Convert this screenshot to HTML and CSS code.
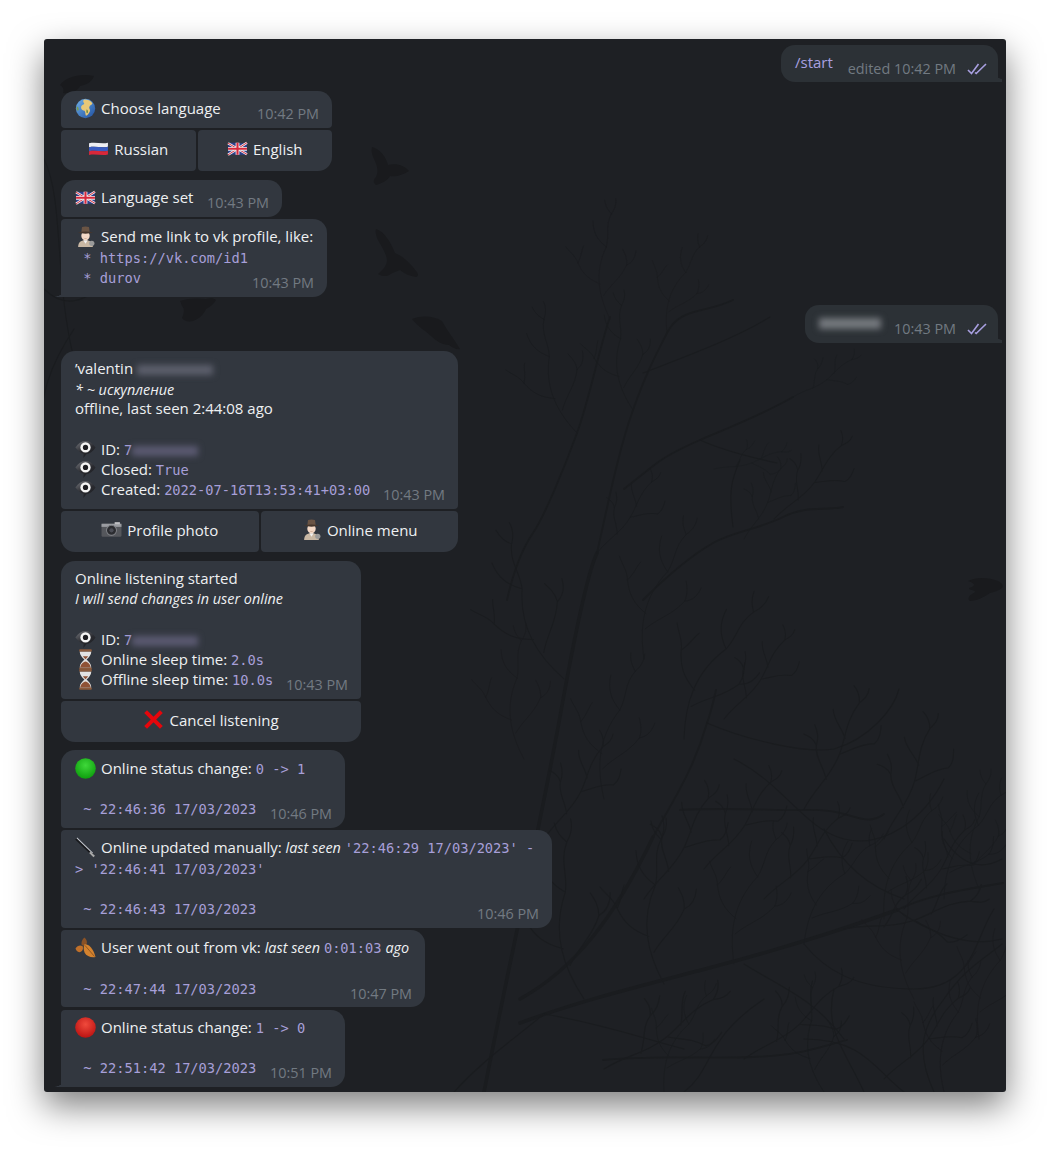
FILE: index.html
```html
<!DOCTYPE html>
<html lang="en">
<head>
<meta charset="utf-8">
<title>Chat</title>
<link rel="stylesheet" href="styles.css">
</head>
<body>
<svg width="0" height="0" class="defs" aria-hidden="true">
  <defs>
    <radialGradient id="g-green" cx=".5" cy=".35" r=".7"><stop offset="0" stop-color="#3fd83a"/><stop offset="1" stop-color="#0a9a0a"/></radialGradient>
    <radialGradient id="g-red" cx=".5" cy=".35" r=".7"><stop offset="0" stop-color="#f04a3c"/><stop offset="1" stop-color="#b80f0f"/></radialGradient>
    <linearGradient id="g-eye" x1="0" y1="0" x2=".6" y2="1"><stop offset="0" stop-color="#75777d"/><stop offset=".6" stop-color="#2a2b30"/><stop offset="1" stop-color="#1d1e22"/></linearGradient>
    <linearGradient id="g-sea" x1="0" y1="0" x2="1" y2="1"><stop offset="0" stop-color="#6fb0e8"/><stop offset="1" stop-color="#1f4fa0"/></linearGradient>
    <symbol id="e-globe" viewBox="0 0 20 20">
      <circle cx="10" cy="10" r="9.200" fill="url(#g-sea)"/>
      <path d="M9 1.500c3 0 6 1 7.600 3.500-.6 2-2.400 1.500-3 3.500-.4 1.800 1.400 2.400.4 4.500-.8 1.600-2 3.400-3.600 4-.8-1.500-.2-3.500-1.300-4.800-1.300-.5-3-.9-3.300-2.700-.3-2 1.200-3 2.700-3.500C9.400 5 7.900 4.200 7.800 3c0-.6.500-1.200 1.200-1.500z" fill="#e8c878"/>
      <path d="M2 8c1.300.5 1.800 2 1.400 3.500-.3 1-1 .8-1.600 0C1.300 10.500 1.400 9 2 8z" fill="#7a9a50"/>
      <path d="M11 11c1 .2 1.600 1.500 1.200 3-.6.800-1.200.4-1.400-.6z" fill="#6a8a40"/>
    </symbol>
    <symbol id="e-ru" viewBox="0 0 20 20">
      <path d="M1 5c6-1.500 12 1 18-.5v3.800c-6 1.500-12-1-18 .5z" fill="#eeeef2"/>
      <path d="M1 8.800c6-1.500 12 1 18-.5v3.800c-6 1.500-12-1-18 .5z" fill="#3a5cc0"/>
      <path d="M1 12.600c6-1.500 12 1 18-.5v3.500c-6 1.500-12-1-18 .5z" fill="#d8283a"/>
    </symbol>
    <symbol id="e-uk" viewBox="0 0 20 20">
      <path d="M1 5c6-1.200 12 .8 18-.4v11c-6 1.200-12-.8-18 .4z" fill="#2c3f8c"/>
      <path d="M1 5l18 10.500M19 4.500L1 16" stroke="#f0f0f0" stroke-width="2.400"/>
      <path d="M1 5l18 10.500M19 4.500L1 16" stroke="#d6283c" stroke-width=".9"/>
      <path d="M10 4.500v11.500M1 10.300h18" stroke="#f0f0f0" stroke-width="3.600"/>
      <path d="M10 4.500v11.500M1 10.300h18" stroke="#d6283c" stroke-width="2"/>
    </symbol>
    <symbol id="e-spy" viewBox="0 0 20 20">
      <path d="M3 20c0-4 2-6.500 7-6.500s7 2.500 7 6.500z" fill="#c9b8a4"/>
      <path d="M8 13.500h4l-2 3.500z" fill="#f2f2f2"/>
      <ellipse cx="10" cy="9.300" rx="4" ry="4.400" fill="#f4d9c6"/>
      <path d="M6.700 1c2.200-.8 4.400-.8 6.600 0l.7 5H6z" fill="#6a5444"/>
      <path d="M2.800 6.300c4.400-1.500 10-1.500 14.400 0-4.400 1.300-10 1.300-14.400 0z" fill="#45362c"/>
      <path d="M8 11.300c1.300.5 2.700.5 4 0-.6 1-3.400 1-4 0z" fill="#b08a70"/>
      <circle cx="16" cy="16.500" r="2.500" fill="#9a9a9a"/>
    </symbol>
    <symbol id="e-eye" viewBox="0 0 20 20">
      <path d="M.4 8C3.500 3.800 6.500 2 10 2s6.500 1.800 9.600 6c-2.700 4-5.600 6-8.600 6.300l-3 3.700.2-4C5.400 13.400 3 11.200.4 8z" fill="url(#g-eye)"/>
      <circle cx="10" cy="8" r="4.900" fill="#f4f4f4"/>
      <circle cx="10" cy="8" r="2.500" fill="#1c1c20"/>
    </symbol>
    <symbol id="e-camera" viewBox="0 0 20 20">
      <rect x=".5" y="4.500" width="19" height="12.500" rx="1.200" fill="#55575c"/>
      <rect x=".5" y="4.500" width="19" height="3" fill="#9a9ca1"/>
      <rect x="13" y="3" width="5" height="2" fill="#c0c0c4"/>
      <circle cx="10" cy="10.800" r="4.800" fill="#2b2c30" stroke="#7d7f84"/>
      <circle cx="10" cy="10.800" r="2" fill="#4b4d55"/>
    </symbol>
    <symbol id="e-glass" viewBox="0 0 20 20">
      <rect x="4" y=".3" width="12" height="2.200" rx=".8" fill="#8a5a3c"/>
      <rect x="4" y="17.500" width="12" height="2.200" rx=".8" fill="#8a5a3c"/>
      <path d="M4.500 2.500h11c0 3-2.300 5.500-4.500 7.500 2.200 2 4.500 4.500 4.500 7.500h-11c0-3 2.300-5.500 4.500-7.500-2.200-2-4.500-4.500-4.500-7.500z" fill="#e2e2e2"/>
      <path d="M7.500 6.800h5c-.6 1-1.500 1.900-2.500 3-1-1.100-1.900-2-2.500-3zM5 17.500c.3-2.800 2.800-5 5-5.500 2.200.5 4.700 2.700 5 5.500z" fill="#8f5236"/>
    </symbol>
    <symbol id="e-x" viewBox="0 0 20 20">
      <path d="M2.500 2.500l15 15M17.500 2.500l-15 15" stroke="#e6060c" stroke-width="3.800" fill="none"/>
    </symbol>
    <symbol id="e-green" viewBox="0 0 20 20"><circle cx="10" cy="10" r="9.800" fill="url(#g-green)"/></symbol>
    <symbol id="e-red" viewBox="0 0 20 20"><circle cx="10" cy="10" r="9.800" fill="url(#g-red)"/></symbol>
    <symbol id="e-knife" viewBox="0 0 20 20">
      <path d="M1 1.500l15.500 14.800" stroke="#17181b" stroke-width="2.400" fill="none"/>
      <path d="M1.800 .8l15 14.500" stroke="#c4c8d0" stroke-width="1" fill="none"/>
      <path d="M14.800 14l4.200 3.800-1.400 1.500-4.200-4z" fill="#a8a8a8"/>
    </symbol>
    <symbol id="e-leaves" viewBox="0 0 20 20">
      <path d="M9 .5c2 1.800 3 4.200 2 6.500-1 1.500-3.300 1.700-4.600.7-.9-2.700.5-5.500 2.600-7.200z" fill="#8a5226"/>
      <path d="M.5 11C2 8.300 5 7.500 7.300 8.800c1 2.500-.5 5.500-3.200 5.700C2.300 14.200 1 12.700.5 11z" fill="#c0702a"/>
      <path d="M9 7c3.500-.5 8 2.800 10.500 12-4 .8-8.500-.5-10.300-4-1.200-2.500-1.200-5.500-.2-8z" fill="#d4822e"/>
      <path d="M9.500 8l9 10.500" stroke="#7a4a1c" stroke-width=".7"/>
    </symbol>
    <symbol id="e-ticks" viewBox="0 0 20 12">
      <path d="M1 7l3.500 3.500L11.500 1M8 9.500l1.200 1L19 1" stroke="#a89fe0" stroke-width="1.600" fill="none"/>
    </symbol>
  </defs>
</svg>

<main class="window">
  <svg class="wall" viewBox="0 0 962 1053" aria-hidden="true">
    <defs>
      <path id="twig" d="M0 0C-10-30-12-60 8-90M8-90c6-14 2-26 12-40M8-90c-10-10-14-20-12-34M-6-45c-14-8-20-16-24-30M-30-75c-2-10-8-14-12-22M-30-75c6-8 6-14 10-20M-4-30c12-14 24-18 34-34M30-64c8-2 12-8 14-16M30-64c2-8 0-14-2-20M20-130c6-6 8-12 8-18M20-130c-4-6-6-10-6-18"/>
      <path id="sprig" d="M0 0C20-8 34-6 52-16 66-24 74-34 92-38M30-7C36-18 34-26 42-34M42-34c2-6 0-10-2-14M42-34c6-4 8-8 10-14M52-16c10 4 18 4 28 12M64-23C68-32 66-40 72-48M80-4c6 0 10-4 14-8M92-38c4-4 6-8 6-14M92-38c6 0 10 0 14-4"/>
    </defs>
    <g class="birds">
      <path d="M16 46c6-8 20-12 34-9-2 6-8 9-14 10-2 5-10 8-17 7 1-3 1-5-3-8z"/>
      <path d="M328 108c8 2 14 10 16 18 8-2 16 0 21 6-6 4-13 6-19 5-2 4-7 7-14 9-3-2-3-5 0-8 3-6 1-12-2-18-2-4-3-8-2-12z"/>
      <path d="M332 190c9 3 15 14 19 24 9 4 15 10 21 18 2 2 3 5 0 6-6-1-11-3-16-7-2 1-6 2-11 5-3 2-8 1-11-1 5-4 9-9 9-14-1-8-6-14-9-20-2-4-3-8-2-11z"/>
      <path d="M136 262c8-3 18-3 26-2 4-1 8-1 10 1-2 4-6 7-10 9-2 5-7 10-13 12-5 1-9 0-11-3 2-4 3-9 0-12-1-2-1-4-2-5z"/>
      <path d="M368 280c10-4 22-3 30 2 4 8 12 18 18 28-3 1-7-1-11-4-6 0-13-4-18-9-5-5-13-9-19-17z"/>
      <path d="M924 542c8-4 20-4 30 0 4 2 6 5 4 7-4 3-8 4-12 5-6 4-13 8-20 8-3-2-1-5 2-7 4-2 4-3 0-4-4-1-4-2 0-3 4-2 2-4-4-6z"/>
    </g>
    <g class="trunks">
      <path class="t1" d="M440 1053C470 900 500 770 519 661 532 590 545 530 553 514"/>
      <path class="t1" d="M476 984C540 960 609 944 680 925S800 890 853 871"/>
      <path class="t1" d="M476 960C530 930 570 880 609 798"/>
      <path class="t2" d="M553 514C565 460 575 410 589 371S610 320 623 294 660 275 689 261"/>
      <path class="t2" d="M463 561C470 530 478 510 489 494S520 430 533 394 555 310 566 278"/>
      <path class="t2" d="M599 561C630 530 650 515 669 504S715 490 739 478 780 472 799 468"/>
      <path class="t2" d="M580 450C595 438 605 430 613 424S640 408 656 401 720 375 749 358"/>
      <path class="t2" d="M853 871C885 855 925 850 959 844"/>
      <path class="t2" d="M559 1021C610 1016 660 1020 709 1018S775 1008 803 1001"/>
      <path class="t2" d="M636 771C690 768 730 772 769 771S820 790 840 775"/>
      <path class="t2" d="M609 798C630 760 650 730 663 684 668 670 670 660 672 651"/>
      <path class="t3" d="M656 401C680 412 705 418 733 424M696 421C688 440 684 450 689 488M599 334C640 318 690 300 726 278"/>
      <path class="t3" d="M663 684C700 700 760 715 790 710 825 700 850 670 855 650M690 720C740 745 760 790 800 800 840 810 880 780 900 740"/>
      <path class="t3" d="M760 905C780 930 810 950 870 950S930 900 950 870M820 1053C800 1010 780 990 790 950M890 1053C870 1010 880 985 900 960 920 930 940 920 958 905"/>
      <path class="t3" d="M500 975C560 985 600 1000 640 1010M640 1053C670 1030 660 1000 720 960M860 1053C830 1030 820 1000 760 1000M0 250C30 280 60 250 90 210"/>
      <path class="t3" d="M0 120C20 160 10 240 30 320M0 410C-10 360 10 320 30 290M410 1053C440 1020 470 1000 500 975"/>
      <path class="t3" d="M853 871C880 890 920 910 958 900M700 925C740 950 770 960 800 1000M900 800C920 830 940 830 958 820M780 790C800 830 830 850 860 860"/>
    </g>
    <g class="twigs">
      <use href="#twig" transform="translate(566 280) rotate(-8) scale(.8)"/>
      <use href="#twig" transform="translate(623 294) rotate(12) scale(.7)"/>
      <use href="#twig" transform="translate(533 394) rotate(-25) scale(.9)"/>
      <use href="#twig" transform="translate(589 371) rotate(-15) scale(.8)"/>
      <use href="#sprig" transform="translate(749 358) rotate(-10) scale(.7)"/>
      <use href="#sprig" transform="translate(670 430) rotate(8) scale(.7)"/>
      <use href="#sprig" transform="translate(730 480) rotate(-25)"/>
      <use href="#sprig" transform="translate(700 500) rotate(-40) scale(.8)"/>
      <use href="#sprig" transform="translate(553 514) rotate(-30) scale(.9)"/>
      <use href="#twig" transform="translate(520 640) rotate(-30) scale(1.100)"/>
      <use href="#twig" transform="translate(600 620) rotate(10) scale(1)"/>
      <use href="#twig" transform="translate(640 700) rotate(20) scale(1.100)"/>
      <use href="#sprig" transform="translate(680 680) rotate(-30) scale(1)"/>
      <use href="#sprig" transform="translate(760 770) rotate(-40) scale(1.200)"/>
      <use href="#sprig" transform="translate(840 800) rotate(-45) scale(1.200)"/>
      <use href="#sprig" transform="translate(860 870) rotate(-30) scale(1)"/>
      <use href="#sprig" transform="translate(800 890) rotate(10) scale(1.300)"/>
      <use href="#twig" transform="translate(760 905) rotate(25) scale(.9)"/>
      <use href="#twig" transform="translate(840 880) rotate(15) scale(.9)"/>
      <use href="#twig" transform="translate(690 925) rotate(10) scale(1)"/>
      <use href="#twig" transform="translate(620 945) rotate(-10) scale(1.100)"/>
      <use href="#twig" transform="translate(540 960) rotate(-15) scale(1.200)"/>
      <use href="#sprig" transform="translate(700 1020) rotate(-15) scale(1.200)"/>
      <use href="#sprig" transform="translate(560 1030) rotate(-10) scale(1.300)"/>
      <use href="#sprig" transform="translate(840 1040) rotate(-25) scale(1.100)"/>
      <use href="#twig" transform="translate(900 1053) rotate(5) scale(.9)"/>
      <use href="#twig" transform="translate(780 1053) rotate(-15) scale(.8)"/>
      <use href="#twig" transform="translate(620 1053) rotate(15) scale(.8)"/>
      <use href="#sprig" transform="translate(500 800) rotate(-35) scale(1.100)"/>
      <use href="#sprig" transform="translate(600 860) rotate(-35) scale(1.200)"/>
      <use href="#twig" transform="translate(900 860) rotate(20) scale(.9)"/>
      <use href="#twig" transform="translate(935 850) rotate(-5) scale(.8)"/>
      <use href="#twig" transform="translate(870 960) rotate(-10) scale(.9)"/>
      <use href="#twig" transform="translate(935 1000) rotate(10) scale(.9)"/>
      <use href="#sprig" transform="translate(720 860) rotate(-25) scale(1.100)"/>
      <use href="#sprig" transform="translate(660 830) rotate(-30) scale(1.100)"/>
      <use href="#twig" transform="translate(560 760) rotate(5) scale(1)"/>
      <use href="#twig" transform="translate(480 720) rotate(-10) scale(.9)"/>
    </g>
  </svg>

  <div class="chat">
    <div class="msg out"><div class="bubble out-bubble w-start tail-r">
      <div class="last"><span class="link up">/start</span><span class="time time-out">edited 10:42 PM<svg class="ticks"><use href="#e-ticks"/></svg></span></div>
    </div></div>

    <div class="msg g9"><div class="bubble w-choose r-kb">
      <div class="last"><span><svg class="emo"><use href="#e-globe"/></svg>Choose language</span><span class="time">10:42 PM</span></div>
    </div>
    <div class="kb w-choose">
      <div class="key k-l">
        <svg class="emo"><use href="#e-ru"/></svg>Russian
      </div>
      <div class="key k-r">
        <svg class="emo"><use href="#e-uk"/></svg>English
      </div>
    </div></div>

    <div class="msg g9"><div class="bubble w-lang r-first">
      <div class="last"><span><svg class="emo"><use href="#e-uk"/></svg>Language set</span><span class="time">10:43 PM</span></div>
    </div></div>

    <div class="msg g2"><div class="bubble w-send r-tail tail-l tall">
      <div class="line up"><svg class="emo"><use href="#e-spy"/></svg>Send me link to vk profile, like:</div>
      <div class="line"><code> * https://vk.com/id1</code></div>
      <div class="last nudge"><code> * durov</code><span class="time">10:43 PM</span></div>
    </div></div>

    <div class="msg out g8"><div class="bubble out-bubble w-out2 tail-r tall">
      <div class="last"><span class="blur blur-out"></span><span class="time time-out">10:43 PM<svg class="ticks"><use href="#e-ticks"/></svg></span></div>
    </div></div>

    <div class="msg g8"><div class="bubble w-profile r-kb tall">
      <div class="line up">’valentin <span class="blur blur-name"></span></div>
      <div class="line"><em>* ~ искупление</em></div>
      <div class="line up">offline, last seen 2:44:08 ago</div>
      <div class="line"></div>
      <div class="line"><svg class="emo"><use href="#e-eye"/></svg>ID: <code>7</code><span class="blur blur-id"></span></div>
      <div class="line"><svg class="emo"><use href="#e-eye"/></svg>Closed: <code>True</code></div>
      <div class="last nudge"><span><svg class="emo"><use href="#e-eye"/></svg>Created: <code>2022-07-16T13:53:41+03:00</code></span><span class="time">10:43 PM</span></div>
    </div>
    <div class="kb w-profile">
      <div class="key k-l">
        <svg class="emo"><use href="#e-camera"/></svg>Profile photo
      </div>
      <div class="key k-r">
        <svg class="emo"><use href="#e-spy"/></svg>Online menu
      </div>
    </div></div>

    <div class="msg g9"><div class="bubble w-listen r-kb tall">
      <div class="line up">Online listening started</div>
      <div class="line up"><em>I will send changes in user online</em></div>
      <div class="line"></div>
      <div class="line"><svg class="emo"><use href="#e-eye"/></svg>ID: <code>7</code><span class="blur blur-id"></span></div>
      <div class="line"><svg class="emo"><use href="#e-glass"/></svg>Online sleep time: <code>2.0s</code></div>
      <div class="last nudge"><span><svg class="emo"><use href="#e-glass"/></svg>Offline sleep time: <code>10.0s</code></span><span class="time">10:43 PM</span></div>
    </div>
    <div class="kb w-listen">
      <div class="key k-l k-r">
        <svg class="emo"><use href="#e-x"/></svg>Cancel listening
      </div>
    </div></div>

    <div class="msg g8"><div class="bubble w-status r-first tall">
      <div class="line"><svg class="emo"><use href="#e-green"/></svg>Online status change: <code>0 -&gt; 1</code></div>
      <div class="line"></div>
      <div class="last nudge"><code> ~ 22:46:36 17/03/2023</code><span class="time">10:46 PM</span></div>
    </div></div>

    <div class="msg g2"><div class="bubble w-manual r-mid tall">
      <div class="line up"><svg class="emo"><use href="#e-knife"/></svg>Online updated manually: <em>last seen</em> <code>'22:46:29 17/03/2023' -</code></div>
      <div class="line"><code>&gt; '22:46:41 17/03/2023'</code></div>
      <div class="line"></div>
      <div class="last nudge"><code> ~ 22:46:43 17/03/2023</code><span class="time">10:46 PM</span></div>
    </div></div>

    <div class="msg g2"><div class="bubble w-out r-mid">
      <div class="line up"><svg class="emo"><use href="#e-leaves"/></svg>User went out from vk: <em>last seen</em> <code>0:01:03</code> <em>ago</em></div>
      <div class="line"></div>
      <div class="last nudge"><code> ~ 22:47:44 17/03/2023</code><span class="time">10:47 PM</span></div>
    </div></div>

    <div class="msg g3"><div class="bubble w-status r-tail tail-l">
      <div class="line up"><svg class="emo"><use href="#e-red"/></svg>Online status change: <code>1 -&gt; 0</code></div>
      <div class="line"></div>
      <div class="last"><code> ~ 22:51:42 17/03/2023</code><span class="time">10:51 PM</span></div>
    </div></div>
  </div>
</main>
</body>
</html>
```

FILE: styles.css
```css
* { box-sizing: border-box; }

html, body { margin: 0; background: #fff; }

body {
  width: 1050px;
  height: 1151px;
  padding: 39px 44px 59px;
  overflow: hidden;
  font: 500 15px/20px "Open Sans", sans-serif;
  color: #eef0f2;
}

.defs { display: block; height: 0; }

.window {
  position: relative;
  width: 962px;
  height: 1053px;
  background: #1e2024;
  border-radius: 3px;
  overflow: hidden;
  box-shadow: 0 14px 34px rgba(0, 0, 0, .5);
}

.wall { position: absolute; inset: 0; width: 962px; height: 1053px; }
.birds { fill: #191a1d; }
.trunks, .twigs { fill: none; stroke: #1a1c1f; stroke-linecap: round; }
.t1 { stroke-width: 3.500; }
.t2 { stroke-width: 1.800; }
.t3 { stroke-width: 1.100; }
.twigs { stroke-width: .9; }

.chat {
  position: relative;
  display: flex;
  flex-direction: column;
  padding: 6px 8px 0 17px;
}

.msg { display: flex; flex-direction: column; align-items: flex-start; }
.out { align-items: flex-end; }
.g2 { margin-top: 2px; }
.g3 { margin-top: 3px; }
.g8 { margin-top: 8px; }
.g9 { margin-top: 9px; }

.bubble {
  position: relative;
  padding: 8px 13px 9px 14px;
  background: #32373f;
  border-radius: 14px;
}
.tall { padding-bottom: 10px; }
.r-kb { border-radius: 14px 14px 4px 4px; }
.r-first { border-radius: 14px 14px 14px 4px; }
.r-mid { border-radius: 4px 14px 14px 4px; }
.r-tail { border-radius: 4px 14px 14px 0; }

.out-bubble {
  background: #2c3136;
  border-radius: 14px 14px 0 14px;
  padding-right: 11px;
}

.tail-l::before,
.tail-r::after {
  content: "";
  position: absolute;
  bottom: 0;
  height: 12px;
}
.tail-l::before {
  left: -7px;
  width: 7px;
  background: radial-gradient(circle at 0 0, transparent 11.500px, #32373f 12px);
}
.tail-r::after {
  right: -4px;
  width: 4px;
  background: radial-gradient(circle at 100% 0, transparent 8.500px, #2c3136 9px);
}

.w-start { width: 217px; }
.w-out2 { width: 193px; }
.w-choose { width: 271px; }
.w-lang { width: 221px; }
.w-send { width: 266px; }
.w-profile { width: 397px; }
.w-listen { width: 300px; }
.w-status { width: 284px; }
.w-manual { width: 491px; }
.w-out { width: 364px; }

.line { height: 20px; white-space: pre; }
.last { display: flex; justify-content: space-between; align-items: flex-end; height: 20px; white-space: pre; }
.nudge { position: relative; top: 1px; }
.up { position: relative; top: -1px; }

.emo {
  width: 21px;
  height: 21px;
  margin-right: 5px;
  vertical-align: -5px;
}

code {
  font: 400 13.700px/20px "DejaVu Sans Mono", monospace;
  color: #a79fd8;
  white-space: pre;
}

em { font-style: italic; font-weight: 400; font-size: 14.400px; }

.link { color: #a9a0e0; }

.time {
  position: relative;
  top: 5px;
  flex: none;
  color: #727a82;
  font-size: 14.400px;
  font-weight: 400;
  white-space: nowrap;
}
.time-out { top: 6px; }

.ticks {
  width: 20px;
  height: 12px;
  margin-left: 11px;
  vertical-align: -1px;
}

.blur {
  display: inline-block;
  height: 10px;
  filter: blur(3px);
}
.blur-name { width: 76px; background: #5c5f6c; vertical-align: -1px; }
.blur-id { width: 66px; background: #5b5a72; vertical-align: -1px; }
.blur-out { width: 62px; height: 11px; background: #74787d; position: relative; top: -4px; }

.kb { display: flex; gap: 2px; margin-top: 2px; }

.key {
  flex: 1;
  display: flex;
  align-items: center;
  justify-content: center;
  height: 41px;
  padding-bottom: 4px;
  background: #32373f;
  border-radius: 4px;
}
.k-l { border-bottom-left-radius: 14px; }
.k-r { border-bottom-right-radius: 14px; }
```
